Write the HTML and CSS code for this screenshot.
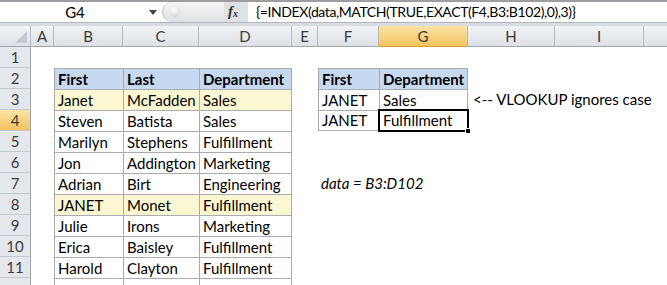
FILE: index.html
```html
<!DOCTYPE html>
<html lang="en">
<head>
    <meta charset="UTF-8">
    <title>INDEX MATCH EXACT</title>
    <link rel="stylesheet" href="styles.css">
</head>
<body>

    <!-- Formula bar -->
    <div class="formula-bar">
        <div class="name-box">G4</div>
        <div class="name-arrow"><svg width="8" height="5" viewBox="0 0 8 5"><path d="M0 0h8L4 5z" fill="#444"/></svg></div>
        <div class="splitter"><span class="knob"></span></div>
        <div class="fx"><i>f</i><sub>x</sub></div>
        <div class="formula">{=INDEX(data,MATCH(TRUE,EXACT(F4,B3:B102),0),3)}</div>
    </div>
    <div class="band"></div>

    <!-- Sheet -->
    <div class="sheet">
        <!-- column headers -->
        <div class="ch corner"><span class="tri"></span></div>
        <div class="ch">A</div>
        <div class="ch">B</div>
        <div class="ch">C</div>
        <div class="ch">D</div>
        <div class="ch">E</div>
        <div class="ch">F</div>
        <div class="ch on">G</div>
        <div class="ch">H</div>
        <div class="ch">I</div>
        <div class="ch"></div>

        <!-- row 1 -->
        <div class="rh">1</div>
        <div></div><div></div><div></div><div></div><div></div><div></div><div></div><div></div><div></div><div></div>

        <!-- row 2 -->
        <div class="rh">2</div>
        <div></div>
        <div class="c t head">First</div>
        <div class="c t head">Last</div>
        <div class="c t head end">Department</div>
        <div></div>
        <div class="c t head">First</div>
        <div class="c t head end">Department</div>
        <div></div><div></div><div></div>

        <!-- row 3 -->
        <div class="rh">3</div>
        <div></div>
        <div class="c t hl">Janet</div>
        <div class="c t hl">McFadden</div>
        <div class="c t hl end">Sales</div>
        <div></div>
        <div class="c t">JANET</div>
        <div class="c t end">Sales</div>
        <div class="c note">&lt;-- VLOOKUP ignores case</div>
        <div></div><div></div>

        <!-- row 4 -->
        <div class="rh on">4</div>
        <div></div>
        <div class="c t">Steven</div>
        <div class="c t">Batista</div>
        <div class="c t end">Sales</div>
        <div></div>
        <div class="c t bottom">JANET</div>
        <div class="c t end bottom selected">Fulfillment<span class="handle"></span></div>
        <div></div><div></div><div></div>

        <!-- row 5 -->
        <div class="rh">5</div>
        <div></div>
        <div class="c t">Marilyn</div>
        <div class="c t">Stephens</div>
        <div class="c t end">Fulfillment</div>
        <div></div><div></div><div></div><div></div><div></div><div></div>

        <!-- row 6 -->
        <div class="rh">6</div>
        <div></div>
        <div class="c t">Jon</div>
        <div class="c t">Addington</div>
        <div class="c t end">Marketing</div>
        <div></div><div></div><div></div><div></div><div></div><div></div>

        <!-- row 7 -->
        <div class="rh">7</div>
        <div></div>
        <div class="c t">Adrian</div>
        <div class="c t">Birt</div>
        <div class="c t end">Engineering</div>
        <div></div>
        <div class="c note-i">data = B3:D102</div>
        <div></div><div></div><div></div><div></div>

        <!-- row 8 -->
        <div class="rh">8</div>
        <div></div>
        <div class="c t hl">JANET</div>
        <div class="c t hl">Monet</div>
        <div class="c t hl end">Fulfillment</div>
        <div></div><div></div><div></div><div></div><div></div><div></div>

        <!-- row 9 -->
        <div class="rh">9</div>
        <div></div>
        <div class="c t">Julie</div>
        <div class="c t">Irons</div>
        <div class="c t end">Marketing</div>
        <div></div><div></div><div></div><div></div><div></div><div></div>

        <!-- row 10 -->
        <div class="rh">10</div>
        <div></div>
        <div class="c t">Erica</div>
        <div class="c t">Baisley</div>
        <div class="c t end">Fulfillment</div>
        <div></div><div></div><div></div><div></div><div></div><div></div>

        <!-- row 11 -->
        <div class="rh">11</div>
        <div></div>
        <div class="c t">Harold</div>
        <div class="c t">Clayton</div>
        <div class="c t end">Fulfillment</div>
        <div></div><div></div><div></div><div></div><div></div><div></div>

        <!-- row 12 (cut off by the window) -->
        <div class="rh"></div>
        <div></div>
        <div class="c t"></div>
        <div class="c t"></div>
        <div class="c t end"></div>
        <div></div><div></div><div></div><div></div><div></div><div></div>
    </div>

</body>
</html>
```

FILE: styles.css
```css
* {
    box-sizing: border-box;
}

body {
    margin: 0;
    background: #fff;
    font-family: "Lato", "Open Sans", sans-serif;
    color: #000;
    overflow: hidden;
}

/* Formula bar */
.formula-bar {
    display: flex;
    height: 22px;
    border-top: 2px solid #9c9ea1;
    background: #fff;
    align-items: stretch;
}

.name-box {
    width: 146px;
    text-align: center;
    font-size: 15px;
    line-height: 20px;
    padding-left: 4px;
}

.name-arrow {
    width: 14px;
    display: flex;
    align-items: center;
    justify-content: center;
}

.splitter {
    width: 62px;
    margin-left: 2px;
    background: linear-gradient(#f4f5f6, #dfe2e5);
    border-radius: 12px 0 0 12px;
    border-left: 1px solid #b9bcc0;
    position: relative;
}

.knob {
    position: absolute;
    left: 7px;
    top: 3px;
    width: 10px;
    height: 12px;
    border-radius: 50%;
    background: radial-gradient(circle at 40% 35%, #fff, #c9cdd2);
}

.fx {
    width: 24px;
    padding-left: 4px;
    font-family: "Liberation Serif", serif;
    font-weight: bold;
    font-size: 15px;
    line-height: 19px;
    color: #333;
    background: #dfe2e5;
}

.fx sub {
    font-size: 10px;
    font-style: italic;
    vertical-align: -1px;
}

.formula {
    flex: 1;
    padding-left: 8px;
    font-size: 14px;
    letter-spacing: -0.4px;
    line-height: 20px;
    white-space: nowrap;
}

.band {
    height: 4px;
    background: #d9dde2;
    border-top: 1px solid #b3b7bd;
}

/* Sheet grid */
.sheet {
    display: grid;
    grid-template-columns: 31px 23px 69px 76px 93px 26px 61px 89px 87px 89px 40px;
    grid-auto-rows: 21px;
    font-size: 15px;
}

.ch {
    background: linear-gradient(#f1f3f5, #dde1e6);
    border-right: 1px solid #b4bac1;
    border-bottom: 1px solid #9ea6af;
    text-align: center;
    line-height: 20px;
    color: #3b3b3b;
}

.ch.on {
    background: linear-gradient(#fbe4a7, #f3c35d);
    border-bottom-color: #e0a133;
}

.corner {
    position: relative;
}

.tri {
    position: absolute;
    right: 3px;
    bottom: 3px;
    width: 0;
    height: 0;
    border-left: 12px solid transparent;
    border-bottom: 12px solid #c4c9cf;
}

.rh {
    background: #e4e7eb;
    border-right: 1px solid #9ea6af;
    border-bottom: 1px solid #c3c8ce;
    text-align: center;
    line-height: 21px;
    color: #3b3b3b;
}

.rh.on {
    background: linear-gradient(#fbe4a7, #f3c35d);
}

/* Cells */
.c {
    padding: 0 3px;
    line-height: 21px;
    white-space: nowrap;
}

.t {
    border-left: 1px solid #a9acb0;
    border-top: 1px solid #a9acb0;
    line-height: 20px;
}

.t.end {
    border-right: 1px solid #a9acb0;
}

.t.bottom {
    border-bottom: 1px solid #a9acb0;
    line-height: 19px;
}

.head {
    background: #c6d9f0;
    font-weight: bold;
}

.hl {
    background: #fcf7d3;
}

.note {
    overflow: visible;
    padding-left: 5px;
}

.note-i {
    font-style: italic;
    overflow: visible;
}

.selected {
    position: relative;
}

.selected::after {
    content: '';
    position: absolute;
    left: -2px;
    top: -2px;
    right: -2px;
    bottom: -2px;
    border: 2px solid #000;
}

.handle {
    position: absolute;
    right: -4px;
    bottom: -4px;
    width: 6px;
    height: 6px;
    background: #000;
    border: 1px solid #fff;
    z-index: 1;
}
```
